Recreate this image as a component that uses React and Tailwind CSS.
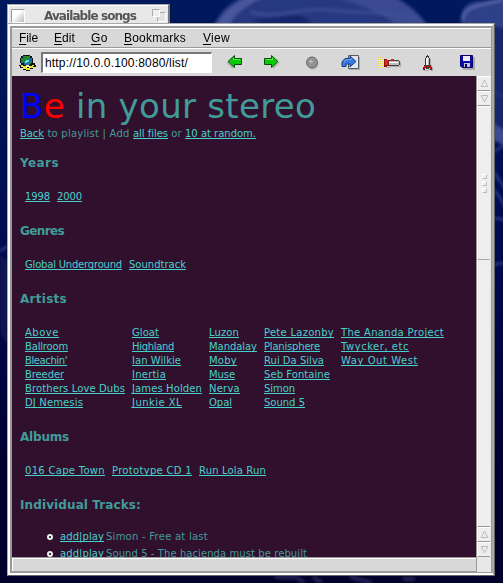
import { useLayoutEffect, useRef, useState } from "react";

// Spreads the letters so that the label takes the given advance width.
function Fit({ w, className = "", children }) {
  const ref = useRef(null);
  const [gap, setGap] = useState(0);
  useLayoutEffect(() => {
    const natural = ref.current.getBoundingClientRect().width;
    setGap((w - natural) / ref.current.textContent.length);
  }, [w]);
  return (
    <span ref={ref} className={"inline-block whitespace-pre " + className} style={{ letterSpacing: gap + "px" }}>
      {children}
    </span>
  );
}

function Link({ w, children }) {
  return (
    <a className="block h-[14px] text-[#48d1cc]">
      <Fit w={w} className="h-[12px] border-b border-[#48d1cc]">{children}</Fit>
    </a>
  );
}

function Heading({ w, children }) {
  return (
    <h2 className="h-4 pl-2 text-[12px] leading-4 font-bold text-[#419c98]">
      <Fit w={w}>{children}</Fit>
    </h2>
  );
}

const artists = [
  { width: "w-[107px]", items: [["Above", 34], ["Ballroom", 43], ["Bleachin'", 42], ["Breeder", 39], ["Brothers Love Dubs", 100], ["DJ Nemesis", 58]] },
  { width: "w-[77px]", items: [["Gloat", 27], ["Highland", 42], ["Ian Wilkie", 49], ["Inertia", 34], ["James Holden", 70], ["Junkie XL", 50]] },
  { width: "w-[55px]", items: [["Luzon", 30], ["Mandalay", 48], ["Moby", 28], ["Muse", 26], ["Nerva", 31], ["Opal", 23]] },
  { width: "w-[77px]", items: [["Pete Lazonby", 70], ["Planisphere", 56], ["Rui Da Silva", 60], ["Seb Fontaine", 66], ["Simon", 31], ["Sound 5", 41]] },
  { width: "w-[110px]", items: [["The Ananda Project", 103], ["Twycker, etc", 68], ["Way Out West", 77]] },
];

function Wallpaper() {
  return (
    <svg className="absolute inset-0 h-full w-full" viewBox="0 0 503 583" preserveAspectRatio="none">
      <defs>
        <linearGradient id="sky" x1="0" y1="0" x2="0" y2="1">
          <stop offset="0" stopColor="#00185c" />
          <stop offset="0.5" stopColor="#00084c" />
          <stop offset="0.8" stopColor="#000030" />
          <stop offset="1" stopColor="#00002a" />
        </linearGradient>
        <filter id="haze"><feGaussianBlur stdDeviation="1.8" /></filter>
      </defs>
      <rect width="503" height="583" fill="url(#sky)" />
      <g filter="url(#haze)">
        <path d="M212 28C220 10 232 0 246-4H392C404 1 416 8 430 28Z" fill="#27387f" />
        <path d="M214 28C226 7 240 0 251-4H268C244 5 231 17 229 28Z" fill="#4a579c" />
        <path d="M250 20L300 15L314 24H262Z" fill="#17276c" />
        <path d="M330-4H392C406 4 418 12 428 28H400C380 10 356 4 330-4Z" fill="#3a4a90" />
        <path d="M250 12C278 20 300 6 330 10S400 10 420 22" fill="none" stroke="#44539a" strokeWidth="3" opacity=".7" />
        <path d="M461 24C459 9 468 0 482 1L506-3V28H470Z" fill="#2f4088" />
        <path d="M463 20C463 7 477 7 484 4L503 0" fill="none" stroke="#5763a5" strokeWidth="2.500" />
        <path d="M493 25L506 30V150L493 132Z" fill="#13266a" />
        <path d="M494 92L506 98M494 124L506 132V146L494 140Z" fill="#3b4c92" stroke="#35468c" />
        <path d="M494 152L506 144M494 172L506 190M494 190Q502 199 506 210M494 218L506 220M494 265Q500 262 506 264" fill="none" stroke="#4454a0" strokeWidth="2" opacity=".8" />
        <path d="M0 251L8 246M0 279L8 285M0 300L8 296" fill="none" stroke="#3a4488" strokeWidth="2" />
        <path d="M0 255L8 262V345L0 333Z" fill="#0b1650" />
        <path d="M275 577L296 577L304 583M313 577L322 583M350 577L372 583M403 579L415 579" fill="none" stroke="#202458" strokeWidth="4" />
      </g>
    </svg>
  );
}

function Globe() {
  return (
    <svg width="18" height="18" viewBox="0 0 18 18" shapeRendering="crispEdges">
      <path d="M5 1h7v1h2v2h1v5h2v2h1v2h-3v2h-3v2H8v-1H5v-2H2v-2H1v-1h2V9H2V4h1V2h2Z" fill="#111" />
      <path d="M5 2h7v2h2v5h-2v2H6V9H3V4h2Z" fill="#116fa6" />
      <path d="M6 2h6v3h-2v1H7v2H4V5h2ZM11 8h2v2h-2Z" fill="#21892f" />
      <path d="M8 6h3v2H9v1H7V7h1Z" fill="#75d7e5" />
      <path d="M3 11h2v1h3v2h3v-2h3v-1h2v1h-1v2h-3v2H8v-1H5v-2H3Z" fill="#eee53a" />
      <path d="M8 11h3v1h1v1h-3v1H8Z" fill="#fff9a0" />
    </svg>
  );
}

function Arrow({ back }) {
  return (
    <svg width="18" height="17" viewBox="0 0 18 17">
      <g transform={back ? "matrix(-1 0 0 1 17 0)" : undefined}>
        <path d="M3 7h7v6l7-6-1 2-6 6v-4H3Z" fill="#a5a5a5" />
        <path d="M1.500 4.500h7v-3l6.500 6-6.500 6v-3h-7Z" fill="#08c808" stroke="#064f08" />
        <path d="M2.500 5.500h7V4" fill="none" stroke="#5aec4c" />
      </g>
    </svg>
  );
}

function Stop() {
  return (
    <svg width="14" height="15" viewBox="0 0 14 15">
      <circle cx="8" cy="9" r="5.500" fill="#bbb" />
      <circle cx="7" cy="7.500" r="5.500" fill="#929292" stroke="#666" />
      <path d="M4 6.500h4M6 4.500v4" stroke="#c4c4c4" />
    </svg>
  );
}

function OpenPage() {
  return (
    <svg width="20" height="17" viewBox="0 0 20 17">
      <path d="M8 3h11v13H8Z" fill="#aaa" />
      <path d="M7.500 1.500h10v13h-10Z" fill="#e2e5ee" stroke="#555b66" />
      <path d="M1 12.500V8l3-3.500h5V2l6 5.500L9 13V10H5v2.500Z" fill="#397be5" stroke="#123070" strokeWidth=".9" />
      <path d="M3 8l2-2.500h5V4" fill="none" stroke="#77aaf8" />
    </svg>
  );
}

function Torch() {
  return (
    <svg width="24" height="14" viewBox="0 0 24 14" shapeRendering="crispEdges">
      <path d="M1.500 1v12M3.500 1v12M5.500 3v8" stroke="#e8e050" strokeDasharray="1 1" />
      <path d="M2.500 2v11M4.500 2v10M6.500 4v7" stroke="#fbf79a" strokeDasharray="1 1" />
      <path d="M9 11h3v-1h11V6h1v5H13v1H9Z" fill="#aaa" />
      <path d="M7 3h3v1h2v6h-2v1H7Z" fill="#8a1212" />
      <path d="M8 4h3v5H8Z" fill="#e02622" />
      <path d="M12 4h10v1h1v4h-1v1H12Z" fill="#444" />
      <path d="M12 5h10v4H12Z" fill="#bbb" />
      <path d="M12 6h9v1h-9Z" fill="#fff" />
      <path d="M14 3h3v2h-3Z" fill="#df1b1b" />
    </svg>
  );
}

function Rocket() {
  return (
    <svg width="12" height="18" viewBox="0 0 12 18" shapeRendering="crispEdges">
      <path d="M8 5h1v6h1v2h1v4H9v-2H7v2H2v-1h6Z" fill="#aaa" />
      <path d="M5 1h1v1h1v2h1v7h1v2h1v3H8v-2H7v1H4v-1H3v2H1v-3h1v-2h1V4h1V2h1Z" fill="#333" />
      <path d="M5 3h1v1h1v7H4V4h1Z" fill="#f4f4f4" />
      <path d="M6 5h1v6H6Z" fill="#bbb" />
      <path d="M3 11h1v1h3v-1h1v1h1v3H8v-2H3v2H2v-3h1ZM5 12h1v3H5Z" fill="#cc1616" />
    </svg>
  );
}

function Disk() {
  return (
    <svg width="15" height="15" viewBox="0 0 15 15">
      <path d="M2 2h13v13H3Z" fill="#aaa" />
      <path d="M.5.5h12v12H2l-1.500-1.500Z" fill="#0b08b8" stroke="#050464" />
      <path d="M3 1h7v5H3Z" fill="#eee" />
      <path d="M4 8h6v4H4Z" fill="#c4c4cc" />
      <path d="M5 9h2v3H5Z" fill="#080764" />
    </svg>
  );
}

function StepButton({ down }) {
  return (
    <div className="flex h-[15px] w-full items-center justify-center border-t border-b border-l border-t-white border-b-[#999] border-l-white bg-[#eee]">
      <svg width="9" height="9" viewBox="0 0 9 9" className={down ? "rotate-180" : ""}>
        <path d="M4.500 1L7.800 7.500H1.200Z" fill="none" stroke="#bcbcbc" />
      </svg>
    </div>
  );
}

function Grip() {
  return <i className="h-[5px] w-[5px] border-t border-r border-b border-l border-t-white border-r-[#bbb] border-b-[#bbb] border-l-white" />;
}

function MenuItem({ first, rest, w, className }) {
  return (
    <div className={className}>
      <Fit w={w}><span className="underline decoration-1 underline-offset-2">{first}</span>{rest}</Fit>
    </div>
  );
}

function Track({ w, children }) {
  return (
    <li className="flex h-[17px] shrink-0 pl-[35px]">
      <i className="mt-[4px] mr-[7px] h-[6px] w-[6px] rounded-full border-2 border-[#eee] bg-black" />
      <Link w={44}>add|play</Link>
      <Fit w={w} className="ml-[2px] h-[14px]">{children}</Fit>
    </li>
  );
}

export default function App() {
  return (
    <div className="relative h-[583px] w-[503px] overflow-hidden font-['Liberation_Sans',sans-serif]">
      <Wallpaper />
      <div className="relative pt-[4px] pl-[7px]">
        <div className="flex h-[19px] w-[163px] items-center border-t border-r-2 border-l border-t-[#aaa] border-r-[#777] border-l-[#aaa] bg-[#e8e8e8] shadow-[inset_1px_1px_0_#fff]">
          <i className="mt-[3px] ml-[3px] h-[14px] w-[14px] border border-t-[#999] border-r-white border-b-white border-l-[#999] bg-linear-to-br from-white from-40% to-[#bbb]" />
          <div className="mt-[3px] ml-[19px] font-['DejaVu_Sans',sans-serif] text-[12px] leading-[16px] font-bold text-[#555]"><Fit w={92}>Available songs</Fit></div>
          <svg className="mt-[3px] ml-[16px] shrink-0" width="15" height="15" viewBox="0 0 15 15">
            <path d="M5.500 4.500h8v9h-8Z" fill="#e2e2e2" stroke="#aaa" />
            <path d="M5.500 13.500h8v-9" fill="none" stroke="#fff" />
            <path d="M.5 1.500h7v7h-7Z" fill="#eee" stroke="#aaa" />
            <path d="M.5 8.500h7v-7" fill="none" stroke="#fff" />
          </svg>
        </div>
        <div className="h-[553px] w-[488px] border border-t-[#aaa] border-r-[#666] border-b-[#666] border-l-[#aaa] bg-[#e8e8e8]">
          <div className="h-[551px] w-[486px] border-t-2 border-r-2 border-b-2 border-l-2 border-t-white border-r-[#aaa] border-b-white border-l-white">
            <div className="h-[547px] w-[482px] border-t-2 border-r border-b border-l-2 border-[#999] bg-[#e8e8e8]">
              <div className="flex h-[20px] border-t border-b border-t-white border-b-[#999] bg-[#d8d8d8] pl-[7px] text-[12px] leading-[19px] text-black">
                <MenuItem first="F" rest="ile" w={19} />
                <MenuItem first="E" rest="dit" w={21} className="ml-[16px]" />
                <MenuItem first="G" rest="o" w={17} className="ml-[16px]" />
                <MenuItem first="B" rest="ookmarks" w={62} className="ml-[16px]" />
                <MenuItem first="V" rest="iew" w={27} className="ml-[17px]" />
              </div>
              <div className="flex h-[28px] items-center border-t border-white bg-[#d8d8d8] pl-[6px]">
                <Globe />
                <div className="ml-[5px] h-[21px] w-[171px] border-t-2 border-r border-b border-l-2 border-t-[#777] border-r-white border-b-white border-l-[#777] bg-white pl-[2px] text-[12px] leading-[18px] text-black"><Fit w={143}>http://10.0.0.100:8080/list/</Fit></div>
                <div className="ml-[14px]"><Arrow back /></div>
                <div className="ml-[19px]"><Arrow /></div>
                <div className="ml-[24px]"><Stop /></div>
                <div className="ml-[22px]"><OpenPage /></div>
                <div className="ml-[16px]"><Torch /></div>
                <div className="ml-[21px]"><Rocket /></div>
                <div className="ml-[26px]"><Disk /></div>
              </div>
              <div className="flex h-[481px]">
                <main className="flex h-full w-[464px] flex-col overflow-hidden bg-[#31102e] font-['DejaVu_Sans',sans-serif] text-[10px] leading-[14px] text-[#419c98]">
                  <h1 className="mt-[10px] h-[41px] shrink-0 pl-[8px] text-[34px] leading-[40px]"><Fit w={296}><span className="text-[#0000ff]">B</span><span className="text-[#ff0000]">e</span> in your stereo</Fit></h1>
                  <p className="flex h-[14px] shrink-0 pl-[8px]">
                    <Link w={24}>Back</Link>
                    <Fit w={89}>{" to playlist | Add "}</Fit>
                    <Link w={35}>all files</Link>
                    <Fit w={17}>{" or "}</Fit>
                    <Link w={71}>10 at random.</Link>
                  </p>
                  <div className="mt-[14px]"><Heading w={39}>Years</Heading></div>
                  <div className="mt-[19px] flex gap-[7px] pl-[13px]"><Link w={25}>1998</Link><Link w={25}>2000</Link></div>
                  <div className="mt-[19px]"><Heading w={44}>Genres</Heading></div>
                  <div className="mt-[19px] flex gap-[7px] pl-[13px]"><Link w={97}>Global Underground</Link><Link w={57}>Soundtrack</Link></div>
                  <div className="mt-[19px]"><Heading w={47}>Artists</Heading></div>
                  <div className="mt-[19px] flex pl-[13px]">
                    {artists.map((column, i) => (
                      <div key={i} className={column.width}>
                        {column.items.map(([name, w]) => <Link key={name} w={w}>{name}</Link>)}
                      </div>
                    ))}
                  </div>
                  <div className="mt-[19px]"><Heading w={49}>Albums</Heading></div>
                  <div className="mt-[19px] flex gap-[7px] pl-[13px]"><Link w={80}>016 Cape Town</Link><Link w={80}>Prototype CD 1</Link><Link w={67}>Run Lola Run</Link></div>
                  <div className="mt-[19px]"><Heading w={121}>Individual Tracks:</Heading></div>
                  <ul className="mt-[17px]">
                    <Track w={102}>Simon - Free at last</Track>
                    <Track w={201}>Sound 5 - The hacienda must be rebuilt</Track>
                  </ul>
                </main>
                <div className="flex h-full w-[14px] flex-col border-l border-[#999] bg-[#eee]">
                  <StepButton />
                  <StepButton down />
                  <div className="flex h-[154px] flex-col items-center justify-center gap-[2px] border-t border-b border-l border-t-white border-b-[#aaa] border-l-white"><Grip /><Grip /><Grip /></div>
                  <div className="flex-1 border-b border-l border-b-[#999] border-l-white" />
                  <StepButton />
                  <StepButton down />
                </div>
              </div>
              <div className="flex h-[15px] bg-[#e8e8e8]">
                <div className="h-[15px] w-[465px] border-t border-r border-b border-[#999] bg-[#d8d8d8] shadow-[inset_1px_1px_0_#fff]" />
              </div>
            </div>
          </div>
        </div>
      </div>
    </div>
  );
}
